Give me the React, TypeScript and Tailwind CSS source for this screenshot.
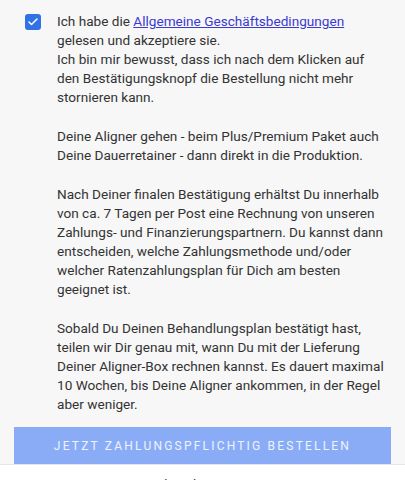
import { Check } from 'lucide-react'

const paragraphs = [
  'Deine Aligner gehen - beim Plus/Premium Paket auch Deine Dauerretainer - dann direkt in die Produktion.',
  'Nach Deiner finalen Bestätigung erhältst Du innerhalb von ca. 7 Tagen per Post eine Rechnung von unseren Zahlungs- und Finanzierungspartnern. Du kannst dann entscheiden, welche Zahlungsmethode und/oder welcher Ratenzahlungsplan für Dich am besten geeignet ist.',
  'Sobald Du Deinen Behandlungsplan bestätigt hast, teilen wir Dir genau mit, wann Du mit der Lieferung Deiner Aligner-Box rechnen kannst. Es dauert maximal 10 Wochen, bis Deine Aligner ankommen, in der Regel aber weniger.',
]

export default function App() {
  return (
    <div className="flex min-h-[480px] flex-col bg-[#f7f7f7] font-['Roboto',sans-serif] text-[#333]">
      <div className="flex gap-[16px] pl-[25px] pr-[17px] pt-[12px]">
        <div className="mt-[2px] flex h-[16px] w-[16px] shrink-0 items-center justify-center rounded-[3px] bg-[#3072e6]">
          <Check className="h-[12px] w-[12px] text-white" strokeWidth={3} />
        </div>
        <div className="text-[13.6px] leading-[19px]">
          <p>
            Ich habe die{' '}
            <a href="#" className="text-[#3a3ad0] underline">
              Allgemeine Geschäftsbedingungen
            </a>{' '}
            <br />
            gelesen und akzeptiere sie.
            <br />
            Ich bin mir bewusst, dass ich nach dem Klicken auf den Bestätigungsknopf die Bestellung nicht mehr stornieren kann.
          </p>
          {paragraphs.map((text) => (
            <p key={text} className="mt-[20px]">
              {text}
            </p>
          ))}
        </div>
      </div>
      <div className="px-[14px] pt-[13px]">
        <button className="h-[37px] w-full bg-[#8aacf6] text-[12px] font-normal uppercase tracking-[2.2px] text-white/85">
          Jetzt zahlungspflichtig bestellen
        </button>
      </div>
      <div className="flex flex-1 justify-center gap-[14px] border-t border-[#e6e6e6] bg-white pt-[10px] text-[13px]">
        <span className="text-[#333]">v2.mydrsmile.com</span>
        <span className="text-[#999]">Privat</span>
      </div>
    </div>
  )
}
